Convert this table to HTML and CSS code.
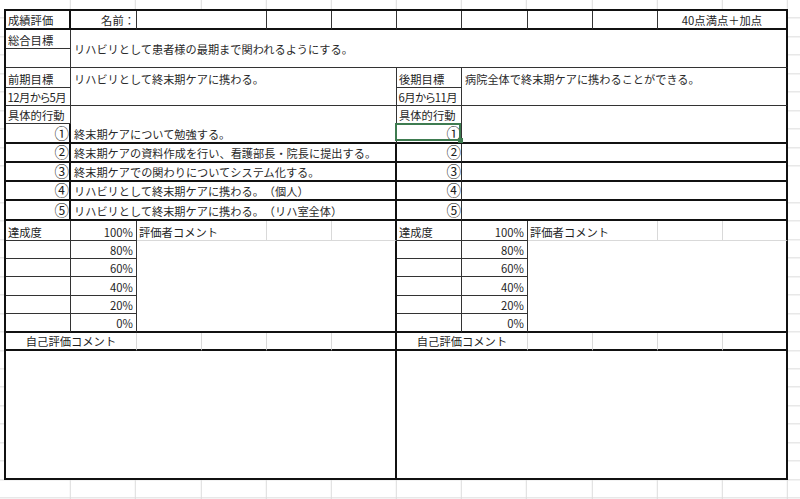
FILE: index.html
```html
<!DOCTYPE html>
<html lang="ja">
<head>
<meta charset="utf-8">
<title>成績評価</title>
<link rel="stylesheet" href="styles.css">
</head>
<body>
<div class="sheet">
  <!-- row 1 -->
  <div class="c rT bT">成績評価</div>
  <div class="c bT right pr0">名前：</div>
  <div class="c s2 bT"></div>
  <div class="c bT"></div>
  <div class="c bT"></div>
  <div class="c bT"></div>
  <div class="c bT"></div>
  <div class="c bT"></div>
  <div class="c bT"></div>
  <div class="c s2 rT bT center">40点満点＋加点</div>
  <!-- rows 2-3 -->
  <div class="c">総合目標</div>
  <div class="c s11 h2 rT mid txt">リハビリとして患者様の最期まで関われるようにする。</div>
  <div class="c"></div>
  <!-- rows 4-5 -->
  <div class="c">前期目標</div>
  <div class="c s5 h2 top txt">リハビリとして終末期ケアに携わる。</div>
  <div class="c">後期目標</div>
  <div class="c s5 h2 rT top txt">病院全体で終末期ケアに携わることができる。</div>
  <div class="c pal">12月から5月</div>
  <div class="c pal">6月から11月</div>
  <!-- rows 6-7 -->
  <div class="c">具体的行動</div>
  <div class="c s5 h2 bT txt">終末期ケアについて勉強する。</div>
  <div class="c">具体的行動</div>
  <div class="c s5 h2 rT bT"></div>
  <div class="c rT bT right num">①</div>
  <div class="c bT right num sel">①<span class="selbox"></span></div>
  <!-- rows 8-11 -->
  <div class="c rT bT right num">②</div>
  <div class="c s5 rT bT txt">終末期ケアの資料作成を行い、看護部長・院長に提出する。</div>
  <div class="c bT right num">②</div>
  <div class="c s5 rT bT"></div>
  <div class="c rT bT right num">③</div>
  <div class="c s5 rT bT txt">終末期ケアでの関わりについてシステム化する。</div>
  <div class="c bT right num">③</div>
  <div class="c s5 rT bT"></div>
  <div class="c rT bT right num">④</div>
  <div class="c s5 rT bT txt">リハビリとして終末期ケアに携わる。（個人）</div>
  <div class="c bT right num">④</div>
  <div class="c s5 rT bT"></div>
  <div class="c rT bT right num">⑤</div>
  <div class="c s5 rT bT txt">リハビリとして終末期ケアに携わる。（リハ室全体）</div>
  <div class="c bT right num">⑤</div>
  <div class="c s5 rT bT"></div>
  <!-- row 12 -->
  <div class="c">達成度</div>
  <div class="c right">100%</div>
  <div class="c s2 rL bL">評価者コメント</div>
  <div class="c rL bL"></div>
  <div class="c rT bL"></div>
  <div class="c">達成度</div>
  <div class="c right">100%</div>
  <div class="c s2 rL bL">評価者コメント</div>
  <div class="c rL bL"></div>
  <div class="c rT bL"></div>
  <!-- rows 13-17 -->
  <div class="c"></div>
  <div class="c right">80%</div>
  <div class="c s4 h5 rT bT"></div>
  <div class="c"></div>
  <div class="c right">80%</div>
  <div class="c s4 h5 rT bT"></div>
  <div class="c"></div>
  <div class="c right">60%</div>
  <div class="c"></div>
  <div class="c right">60%</div>
  <div class="c"></div>
  <div class="c right">40%</div>
  <div class="c"></div>
  <div class="c right">40%</div>
  <div class="c"></div>
  <div class="c right">20%</div>
  <div class="c"></div>
  <div class="c right">20%</div>
  <div class="c bT"></div>
  <div class="c bT right">0%</div>
  <div class="c bT"></div>
  <div class="c bT right">0%</div>
  <!-- row 18 -->
  <div class="c s2 rL bT center">自己評価コメント</div>
  <div class="c rL bT"></div>
  <div class="c rL bT"></div>
  <div class="c rL bT"></div>
  <div class="c rT bT"></div>
  <div class="c s2 rL bT center">自己評価コメント</div>
  <div class="c rL bT"></div>
  <div class="c rL bT"></div>
  <div class="c rL bT"></div>
  <div class="c rT bT"></div>
  <!-- row 19 -->
  <div class="c s6 rT bT"></div>
  <div class="c s6 rT bT"></div>
</div>
</body>
</html>
```

FILE: styles.css
```css
html, body {
  margin: 0;
  padding: 0;
  width: 800px;
  height: 499px;
  overflow: hidden;
}

body {
  background-color: #ffffff;
  background-image:
    repeating-linear-gradient(to right, transparent 0 64.17px, #dcdcdc 64.17px 65.17px),
    repeating-linear-gradient(to bottom, transparent 0 17.45px, #dcdcdc 17.45px 18.45px);
  background-position: 5.8px 0, 0 0.35px;
  font-family: "Noto Sans CJK JP", "Noto Sans", sans-serif;
  color: #1e1e1e;
  text-spacing-trim: space-all;
}

.sheet {
  box-sizing: content-box;
  width: 782px;
  margin: 9px 0 0 4px;
  border-left: 2px solid #111;
  border-top: 2px solid #111;
  background: #ffffff;
  display: grid;
  grid-template-columns: 65px 66px 65px 65px 65px 65px 65px 66px 65px 65px 65px 65px;
  grid-template-rows: 19px 19px 19px 20px 18px 18px 20px 19px 19px 19px 20px 20px 18px 18px 19px 18px 19px 18px 129px;
}

.c {
  box-sizing: border-box;
  min-width: 0;
  display: flex;
  align-items: flex-end;
  justify-content: flex-start;
  padding: 0 2px 1.5px 2px;
  border-right: 1px solid #333;
  border-bottom: 1px solid #333;
  font-size: 11.3px;
  line-height: 14px;
  white-space: nowrap;
}

.rT { border-right: 2px solid #111; }
.bT { border-bottom: 2px solid #111; }
.rL { border-right: 1px solid #d9d9d9; }
.bL { border-bottom: 1px solid #d9d9d9; }

.right { justify-content: flex-end; padding-right: 3px; }
.pr0 { padding-right: 1px; }
.center { justify-content: center; }
.mid { align-items: center; padding-bottom: 0; }
.top { align-items: flex-start; padding-top: 4px; }
.pal {
  font-feature-settings: "palt";
  letter-spacing: -0.5px;
  padding-left: 1.5px;
}

.txt {
  font-size: 11.2px;
  color: #2a2a2a;
  padding-left: 3px;
}

.num {
  font-size: 14.5px;
  line-height: 16px;
  padding-right: 0;
  padding-bottom: 1px;
}

.s2 { grid-column: span 2; }
.s4 { grid-column: span 4; }
.s5 { grid-column: span 5; }
.s6 { grid-column: span 6; }
.s11 { grid-column: span 11; }
.h2 { grid-row: span 2; }
.h5 { grid-row: span 5; }

.sel { position: relative; }

.selbox {
  position: absolute;
  left: -2px;
  top: -1px;
  right: 0;
  bottom: 1px;
  border: 2px solid #3e7b50;
  pointer-events: none;
}

.selbox::after {
  content: "";
  position: absolute;
  width: 5px;
  height: 5px;
  right: -4px;
  bottom: -4px;
  background: #3e7b50;
}
```
